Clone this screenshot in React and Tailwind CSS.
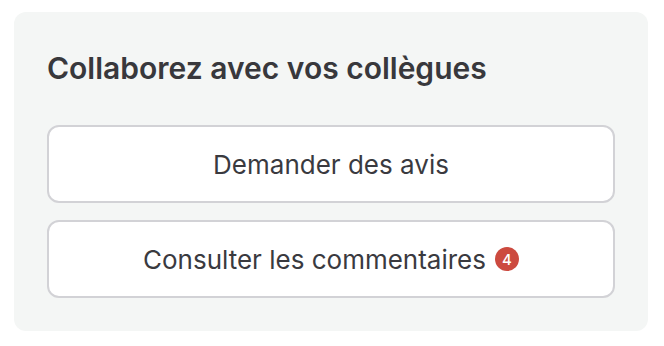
import React from 'react'

const font = { fontFamily: 'Inter, "Liberation Sans", sans-serif' }

function ActionButton({ label, count }) {
  return (
    <button className="flex h-[78px] w-full items-center justify-center gap-[9px] rounded-[12px] border-2 border-[#d2d2d6] bg-white text-[26px] text-[#3a3a3f]">
      <span>{label}</span>
      {count ? (
        <span className="flex h-[24px] w-[24px] items-center justify-center rounded-full bg-[#cc4a3f] text-[15px] font-medium leading-none text-white">
          {count}
        </span>
      ) : null}
    </button>
  )
}

export default function App() {
  return (
    <div className="h-[346px] w-[664px] bg-white pl-[14px] pt-[12px]" style={font}>
      <section className="flex h-[319px] w-[634px] flex-col rounded-[12px] bg-[#f4f6f5] px-[33px] pt-[38px]">
        <h2 className="text-[30px] font-semibold leading-[36px] text-[#38383c]">Collaborez avec vos collègues</h2>
        <div className="mt-[39px] flex flex-col gap-[17px]">
          <ActionButton label="Demander des avis" />
          <ActionButton label="Consulter les commentaires" count={4} />
        </div>
      </section>
    </div>
  )
}
